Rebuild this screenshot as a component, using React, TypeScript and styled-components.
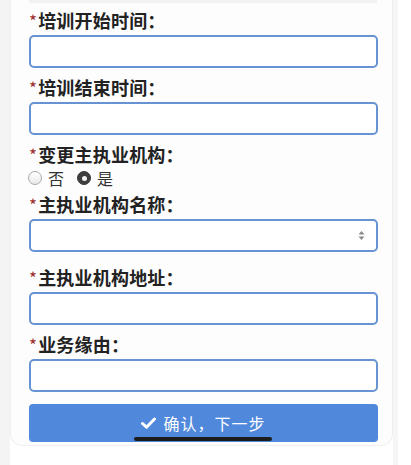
import React, { useState } from 'react';
import styled, { createGlobalStyle } from 'styled-components';

const GlobalStyle = createGlobalStyle`
  html, body {
    margin: 0;
    padding: 0;
    background: #ffffff;
    font-family: "Noto Sans CJK SC", "Noto Sans", sans-serif;
  }
  * { box-sizing: border-box; }
`;

const Page = styled.div`
  position: relative;
  width: 411px;
  height: 465px;
  overflow: hidden;
  background: linear-gradient(to right, #f4f4f4 0, #f4f4f4 10px, #ffffff 10px, #ffffff 393px, #f6f6f6 393px, #f6f6f6 398px, #ffffff 398px);
`;

const Card = styled.div`
  margin-left: 10px;
  width: 383px;
  background: #fdfdfd;
  border-left: 1px solid #efefef;
  border-right: 1px solid #eeeeee;
  border-bottom: 1px solid #f0f0f0;
  border-radius: 0 0 12px 12px;
  padding: 0 14px 3px 18px;
`;

const TopStrip = styled.div`
  height: 3px;
  background: #f2f2f2;
  margin: 0 1px 6px 0;
`;

const Field = styled.div``;

const Label = styled.div`
  height: 22px;
  line-height: 22px;
  margin: 0 0 4px;
  font-size: 18px;
  font-weight: 700;
  color: #222222;
  letter-spacing: 0.2px;
`;

const Star = styled.span`
  color: #9c2f2f;
  font-weight: 400;
  font-size: 17px;
  margin-right: 1px;
`;

const TextInput = styled.input`
  display: block;
  width: 349px;
  height: 33px;
  border: 2px solid #6893d2;
  border-radius: 5px;
  background: #ffffff;
  outline: none;
  margin-bottom: 8px;
`;

const SelectBox = styled.div`
  display: flex;
  align-items: center;
  justify-content: flex-end;
  width: 349px;
  height: 33px;
  border: 2px solid #6893d2;
  border-radius: 5px;
  background: #ffffff;
  padding-right: 11px;
  margin-bottom: 14px;
`;

const RadioRow = styled.div`
  display: flex;
  align-items: center;
  height: 20px;
  margin: -1px 0 5px -1px;
  font-size: 16px;
  color: #333333;
`;

const RadioOption = styled.label`
  display: flex;
  align-items: center;
  gap: 6px;
  margin-right: 13px;
`;

const RadioCircle = styled.span<{ $checked: boolean }>`
  width: 14px;
  height: 14px;
  border-radius: 50%;
  display: flex;
  align-items: center;
  justify-content: center;
  border: 1px solid ${p => (p.$checked ? '#3a3a3a' : '#a9a9a9')};
  background: ${p => (p.$checked ? '#3e3e3e' : 'linear-gradient(#ffffff, #e9e9e9)')};

  &::after {
    content: '';
    display: ${p => (p.$checked ? 'block' : 'none')};
    width: 5px;
    height: 5px;
    border-radius: 50%;
    background: #f4f4f4;
  }
`;

const SubmitButton = styled.button`
  display: flex;
  align-items: center;
  justify-content: center;
  gap: 7px;
  width: 349px;
  height: 38px;
  margin-top: 12px;
  border: none;
  border-radius: 4px;
  background: #5088dc;
  color: #ffffff;
  font-family: "Noto Sans CJK SC", "Noto Sans", sans-serif;
  font-size: 16px;
  letter-spacing: 1px;
`;

const HomeIndicator = styled.div`
  position: absolute;
  left: 134px;
  top: 437px;
  width: 138px;
  height: 4px;
  border-radius: 2px;
  background: #1c1c1c;
`;

const Check = () => (
  <svg width="15" height="12" viewBox="0 0 15 12">
    <path d="M1.5 6.5 L5.5 10.2 L13.5 2" fill="none" stroke="#ffffff" strokeWidth="3" strokeLinecap="round" strokeLinejoin="round" />
  </svg>
);

const UpDown = () => (
  <svg width="7" height="11" viewBox="0 0 7 11">
    <path d="M3.5 1 L6.5 4.5 H0.5 Z" fill="#8a8a8a" />
    <path d="M3.5 10 L6.5 6.5 H0.5 Z" fill="#8a8a8a" />
  </svg>
);

function App() {
  const [change, setChange] = useState<'no' | 'yes'>('yes');

  return (
    <>
      <GlobalStyle />
      <Page>
        <Card>
          <TopStrip />
          <Field>
            <Label><Star>*</Star>培训开始时间：</Label>
            <TextInput />
          </Field>
          <Field>
            <Label><Star>*</Star>培训结束时间：</Label>
            <TextInput />
          </Field>
          <Field>
            <Label><Star>*</Star>变更主执业机构：</Label>
            <RadioRow>
              <RadioOption onClick={() => setChange('no')}>
                <RadioCircle $checked={change === 'no'} />否
              </RadioOption>
              <RadioOption onClick={() => setChange('yes')}>
                <RadioCircle $checked={change === 'yes'} />是
              </RadioOption>
            </RadioRow>
          </Field>
          <Field>
            <Label><Star>*</Star>主执业机构名称：</Label>
            <SelectBox><UpDown /></SelectBox>
          </Field>
          <Field>
            <Label><Star>*</Star>主执业机构地址：</Label>
            <TextInput />
          </Field>
          <Field>
            <Label><Star>*</Star>业务缘由：</Label>
            <TextInput />
          </Field>
          <SubmitButton>
            <Check />
            确认，下一步
          </SubmitButton>
        </Card>
        <HomeIndicator />
      </Page>
    </>
  );
}

export default App;
